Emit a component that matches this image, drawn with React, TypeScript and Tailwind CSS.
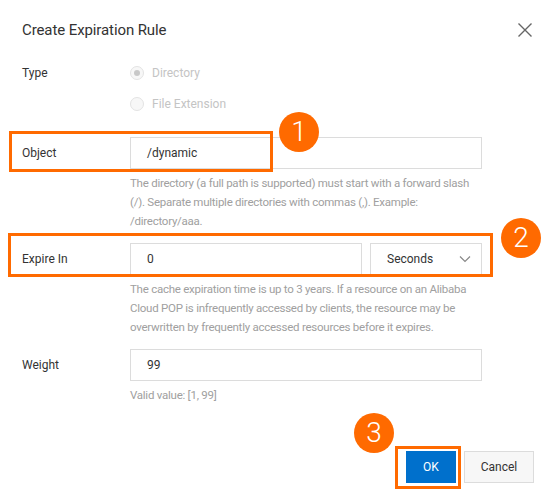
import React from 'react'

const Badge = ({ n, className }: { n: string; className: string }) => (
  <div
    className={`absolute w-10 h-10 rounded-full bg-[#ff6a00] text-white flex items-center justify-center text-[28px] font-light leading-none ${className}`}
  >
    {n}
  </div>
)

const Field = ({
  label,
  children,
  help,
}: {
  label: string
  children: React.ReactNode
  help: React.ReactNode
}) => (
  <div className="grid grid-cols-[108px_352px] mb-3">
    <div className="h-8 flex items-center text-[12px] text-[#333]">{label}</div>
    <div>
      {children}
      <p className="mt-[5px] text-[11.5px] leading-[19px] tracking-[-0.25px] text-[#a0a0a0]">{help}</p>
    </div>
  </div>
)

const TextInput = ({ value, className = '' }: { value: string; className?: string }) => (
  <div
    className={`h-8 border border-[#dcdcdc] bg-white flex items-center pl-4 text-[12px] text-[#333] ${className}`}
  >
    {value}
  </div>
)

const Radio = ({ label, checked }: { label: string; checked?: boolean }) => (
  <label className="h-5 flex items-center gap-[8px] text-[12px] text-[#c4c4c4]">
    <span className="w-[14px] h-[14px] rounded-full border border-[#e3e3e3] bg-[#f7f7f7] flex items-center justify-center">
      {checked && <span className="w-[6px] h-[6px] rounded-full bg-[#c8c8c8]" />}
    </span>
    {label}
  </label>
)

export default function App() {
  return (
    <div className="relative w-[557px] h-[498px] bg-white font-['Roboto','Liberation_Sans',sans-serif]">
      <div className="flex items-center justify-between pl-[22px] pr-[24px] pt-[18px]">
        <h2 className="text-[15px] leading-6 tracking-[-0.1px] text-[#333]">Create Expiration Rule</h2>
        <svg width="16" height="16" viewBox="0 0 16 16" className="text-[#666]">
          <path d="M1.5 1.5 L14.5 14.5 M14.5 1.5 L1.5 14.5" stroke="currentColor" strokeWidth="1.4" fill="none" />
        </svg>
      </div>

      <div className="pl-[22px] mt-[21px]">
        <div className="grid grid-cols-[108px_352px] mb-[23px]">
          <div className="h-5 flex items-center text-[12px] text-[#333]">Type</div>
          <div className="flex flex-col gap-[11px]">
            <Radio label="Directory" checked />
            <Radio label="File Extension" />
          </div>
        </div>

        <Field
          label="Object"
          help="The directory (a full path is supported) must start with a forward slash (/). Separate multiple directories with commas (,). Example: /directory/aaa."
        >
          <TextInput value="/dynamic" />
        </Field>

        <Field
          label="Expire In"
          help="The cache expiration time is up to 3 years. If a resource on an Alibaba Cloud POP is infrequently accessed by clients, the resource may be overwritten by frequently accessed resources before it expires."
        >
          <div className="flex gap-2">
            <TextInput value="0" className="flex-1" />
            <div className="w-[112px] h-8 border border-[#dcdcdc] flex items-center justify-between pl-4 pr-[10px] text-[12px] text-[#333]">
              Seconds
              <svg width="12" height="8" viewBox="0 0 12 8" className="text-[#888]">
                <path d="M1 1.5 L6 6.5 L11 1.5" stroke="currentColor" strokeWidth="1.2" fill="none" />
              </svg>
            </div>
          </div>
        </Field>

        <Field label="Weight" help="Valid value: [1, 99]">
          <TextInput value="99" />
        </Field>
      </div>

      <div className="flex justify-end gap-2 pr-[23px] mt-[46px]">
        <button className="w-[50px] h-8 bg-[#0070cc] text-white text-[12px]">OK</button>
        <button className="w-[70px] h-8 bg-[#f7f7f7] border border-[#dcdcdc] text-[#333] text-[12px]">Cancel</button>
      </div>

      {/* annotations */}
      <div className="absolute left-[9px] top-[131px] w-[264px] h-[41px] border-[3px] border-[#ff6a00]" />
      <div className="absolute left-[8px] top-[233px] w-[485px] h-[44px] border-[3px] border-[#ff6a00]" />
      <div className="absolute left-[395px] top-[446px] w-[66px] h-[43px] border-[3px] border-[#ff6a00]" />
      <Badge n="1" className="left-[279px] top-[112px]" />
      <Badge n="2" className="left-[501px] top-[218px]" />
      <Badge n="3" className="left-[354px] top-[413px]" />
    </div>
  )
}
